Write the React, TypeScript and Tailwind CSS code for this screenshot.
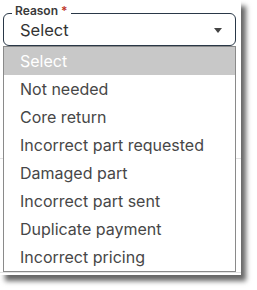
const options = [
  "Select",
  "Not needed",
  "Core return",
  "Incorrect part requested",
  "Damaged part",
  "Incorrect part sent",
  "Duplicate payment",
  "Incorrect pricing",
];

export default function App() {
  return (
    <div className="w-[257px] h-[290px] bg-white font-['Inter',sans-serif]">
      {/* cropped screenshot with drop shadow */}
      <div className="relative w-[241px] h-[275px] bg-white shadow-[5px_6px_5px_rgba(0,0,0,0.6)] overflow-hidden">
        {/* faint page content behind the menu */}
        <div className="absolute left-0 top-[158px] w-full border-t border-[#e2e2e2]"></div>
        <div className="absolute left-0 top-[272px] w-full border-t border-[#e2e2e2]"></div>

        <div className="relative pl-[3px] pt-[13px] w-[236px]">
          <div className="relative h-[33px] w-[233px] border border-[#2a3847] rounded-[6px] flex items-center pl-[16px] pr-[13px] bg-white">
            <span className="absolute left-[8px] top-[-11px] bg-white px-[3px] text-[12px] leading-[15px] font-semibold text-[#3a3a3a]">
              Reason <span className="text-[#c0392b]">*</span>
            </span>
            <span className="flex-1 text-[16.5px] text-[#333] pt-[1px]">Select</span>
            <svg width="8" height="5" viewBox="0 0 8 5" className="mt-[2px]">
              <path d="M0 0h8L4 5z" fill="#444" />
            </svg>
          </div>
          <ul className="border border-[#8a8a8a] bg-white">
            {options.map((o, i) => (
              <li
                key={o}
                className={
                  i === 0
                    ? "h-[28px] flex items-center pl-[16px] text-[16px] bg-[#c8c8c8] text-white"
                    : "h-[28px] flex items-center pl-[16px] text-[16px] text-[#474747]"
                }
              >
                {o}
              </li>
            ))}
          </ul>
        </div>
      </div>
    </div>
  );
}
